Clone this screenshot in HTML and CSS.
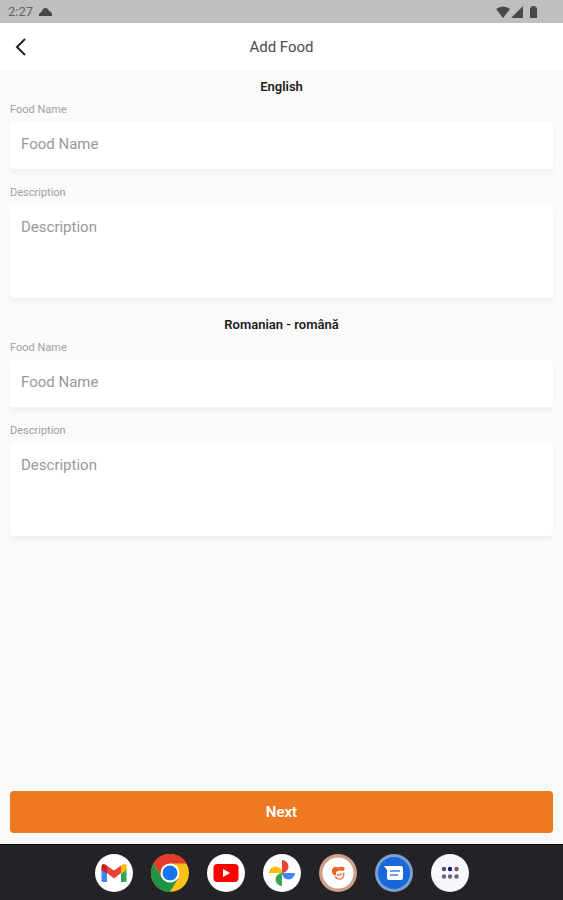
FILE: index.html
```html
<!DOCTYPE html>
<html lang="en">
<head>
<meta charset="utf-8">
<meta name="viewport" content="width=device-width, initial-scale=1">
<title>Add Food</title>
<link rel="stylesheet" href="styles.css">
</head>
<body>
<div class="status">
  <span class="time">2:27</span>
  <svg class="cloud" width="13" height="8" viewBox="0 0 13 8"><path d="M0 8V6.500Q.3 4.500 2.500 4Q3.500 0 6.500 0Q9 0 10 3Q13 4 13 6.500V8Z"/></svg>
  <svg class="signals" width="42" height="14" viewBox="0 0 42 14"><path d="M0 4Q7 -1 14 4L7 13ZM27 1V13H15ZM34 2.500H35.500V1H39.500V2.500H41V13H34Z"/></svg>
</div>
<header class="bar">
  <button class="back" type="button" aria-label="Back"><svg width="12" height="18" viewBox="0 0 12 18"><path d="M10 1L2 9L10 17"/></svg></button>
  <h1>Add Food</h1>
</header>
<form class="form">
  <section class="language">
    <h2>English</h2>
    <div class="field"><label for="name-en">Food Name</label><input id="name-en" type="text" placeholder="Food Name"></div>
    <div class="field"><label for="desc-en">Description</label><textarea id="desc-en" placeholder="Description"></textarea></div>
  </section>
  <section class="language">
    <h2>Romanian - română</h2>
    <div class="field"><label for="name-ro">Food Name</label><input id="name-ro" type="text" placeholder="Food Name"></div>
    <div class="field"><label for="desc-ro">Description</label><textarea id="desc-ro" placeholder="Description"></textarea></div>
  </section>
  <button class="next" type="submit">Next</button>
</form>
<nav class="dock" aria-label="Apps">
  <a href="#" aria-label="Gmail"><svg viewBox="0 0 38 38"><circle cx="19" cy="19" r="19" fill="#fff"/><path d="M6.500 14V26.500Q6.500 28 8 28H12V17Z" fill="#4285f4"/><path d="M26 17V28H30Q31.500 28 31.500 26.500V14Z" fill="#34a853"/><path d="M26 12V20L31.500 16V12Q31.500 10 29.500 10Q28 10 26 12Z" fill="#fbbc04"/><path d="M10 10.500L19 16.500L26 11.500V19L19 24.500L12 19Z" fill="#ea4335"/><path d="M6.500 16V12Q6.500 10 8.500 10Q10 10 12 12V19.500Z" fill="#c5221f"/></svg></a>
  <a href="#" aria-label="Chrome"><svg viewBox="0 0 38 38"><circle cx="19" cy="19" r="19" fill="#fbc116"/><path d="M2.500 9.500A19 19 0 0 1 35.500 9.500H19L11 23.500Z" fill="#e33b2e"/><path d="M2.500 9.500A19 19 0 0 0 19 38L27.500 23.500H11Z" fill="#229342"/><circle cx="19" cy="19" r="9.500" fill="#fff"/><circle cx="19" cy="19" r="7.500" fill="#1a73e8"/></svg></a>
  <a href="#" aria-label="YouTube"><svg viewBox="0 0 38 38"><circle cx="19" cy="19" r="19" fill="#fff"/><rect x="6.500" y="10" width="25" height="18" rx="4" fill="#f00"/><path d="M16 15L23 19L16 23Z" fill="#fff"/></svg></a>
  <a href="#" aria-label="Photos"><svg viewBox="0 0 38 38"><circle cx="19" cy="19" r="19" fill="#fff"/><path d="M19 19V6A6.500 6.500 0 0 1 19 19Z" fill="#ea4335"/><path d="M19 19H32A6.500 6.500 0 0 1 19 19Z" fill="#4285f4"/><path d="M19 19V32A6.500 6.500 0 0 1 19 19Z" fill="#34a853"/><path d="M19 19H6A6.500 6.500 0 0 1 19 19Z" fill="#fbbc04"/></svg></a>
  <a href="#" aria-label="Food app"><svg viewBox="0 0 38 38"><circle cx="19" cy="19" r="19" fill="#cf9f88"/><circle cx="19" cy="19" r="15.500" fill="#fff"/><path d="M14.500 21Q11.500 17 14 14Q16 12 18.500 13.500Q22 12 25.500 13.500Q26 17 23 17Q20 16 18 17.500Q16 19 17.500 21.500Z" fill="#ee6426"/><path d="M16 22.500Q18 25.500 22 25Q25.500 23 24.500 18.500M18 20.500Q20 22 23 19.500" fill="none" stroke="#ee8257" stroke-width="1.600"/></svg></a>
  <a href="#" aria-label="Messages"><svg viewBox="0 0 38 38"><circle cx="19" cy="19" r="19" fill="#7d9fce"/><circle cx="19" cy="19" r="16" fill="#1967d8"/><path d="M9 12H26Q28 12 28 14V24Q28 26 26 26H14Q12 26 12 24V16Z" fill="#fff"/><path d="M15 17H25M15 21H23" stroke="#6fa1ef" stroke-width="2"/></svg></a>
  <a href="#" aria-label="All apps"><svg viewBox="0 0 38 38"><circle cx="19" cy="19" r="19" fill="#f8f8fc"/><g fill="#65677d"><circle cx="13" cy="15" r="2.200" fill="#44508f"/><circle cx="19" cy="15" r="2.200" fill="#15157c"/><circle cx="25.500" cy="15" r="2.200" fill="#82506a"/><circle cx="13" cy="22.500" r="2.200"/><circle cx="19" cy="22.500" r="2.200"/><circle cx="25.500" cy="22.500" r="2.200"/></g></svg></a>
</nav>
</body>
</html>
```
FILE: styles.css
```css
* { box-sizing: border-box; }
body {
  margin: 0;
  min-height: 100vh;
  display: flex;
  flex-direction: column;
  background: #fafafa;
  font-family: Roboto, "Liberation Sans", sans-serif;
}
h1, h2 { margin: 0; }
button, input, textarea { font-family: inherit; border: 0; }
.status {
  display: flex;
  align-items: center;
  gap: 6px;
  height: 23px;
  padding: 0 25px 0 8px;
  background: #bfbfbf;
  color: #666;
  font-size: 13px;
}
.status svg { fill: #484848; }
.signals { margin-left: auto; }
.bar {
  display: grid;
  grid-template-columns: 42px 1fr 42px;
  align-items: center;
  height: 47px;
  background: #fff;
}
.bar h1 {
  text-align: center;
  font-size: 15px;
  font-weight: 400;
  color: #4c4c4c;
}
.back {
  display: flex;
  justify-content: center;
  padding: 0;
  background: none;
}
.back path { fill: none; stroke: #222; stroke-width: 2; }
.form {
  flex: 1;
  display: flex;
  flex-direction: column;
  gap: 18px;
  padding: 8px 10px 11px;
}
.language h2 {
  margin-bottom: 6px;
  text-align: center;
  font-size: 13px;
  line-height: 18px;
  font-weight: 600;
  color: #1c1c1c;
}
.field {
  display: flex;
  flex-direction: column;
  gap: 4px;
}
.field + .field { margin-top: 16px; }
.field label {
  font-size: 11px;
  line-height: 16px;
  color: #a0a0a0;
}
.field input, .field textarea {
  width: 100%;
  padding: 0 11px;
  border-radius: 4px;
  background: #fff;
  box-shadow: 0 4px 4px rgba(0, 0, 0, 0.04);
  font-size: 15px;
  line-height: 20px;
  color: #333;
}
.field input { height: 47px; padding-bottom: 3px; }
.field textarea {
  display: block;
  height: 93px;
  padding-top: 12px;
  resize: none;
}
.field ::placeholder { color: #999; opacity: 1; }
.next {
  margin-top: auto;
  height: 42px;
  border-radius: 4px;
  background: #ee7920;
  color: #fff;
  font-size: 15px;
  font-weight: 600;
}
.dock {
  display: flex;
  justify-content: center;
  align-items: center;
  gap: 18px;
  height: 56px;
  background: #232327;
  border-top: 1px solid #000;
}
.dock a, .dock svg { display: block; width: 38px; height: 38px; }
```
